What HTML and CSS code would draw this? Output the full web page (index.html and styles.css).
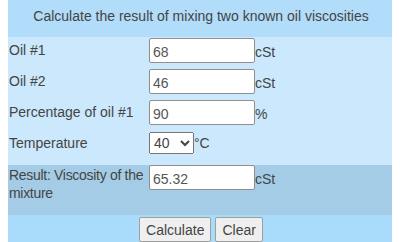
FILE: index.html
```html
<!DOCTYPE html>
<html>
<head>
    <meta name="viewport" content="width=device-width, initial-scale=1">
    <link rel="stylesheet" href="styles.css">
</head>
<body>
    <div class="calc">
        <div class="calc-title">Calculate the result of mixing two known oil viscosities</div>

        <div class="calc-row">
            <label for="oil1">Oil #1</label>
            <div class="field"><input type="text" id="oil1" value="68">cSt</div>
        </div>
        <div class="calc-row">
            <label for="oil2">Oil #2</label>
            <div class="field"><input type="text" id="oil2" value="46">cSt</div>
        </div>
        <div class="calc-row">
            <label for="pct">Percentage of oil #1</label>
            <div class="field"><input type="text" id="pct" value="90">%</div>
        </div>
        <div class="calc-row row-temp">
            <label for="temp">Temperature</label>
            <div class="field"><select id="temp">
                    <option>40</option>
                    <option>100</option>
                </select>°C</div>
        </div>

        <div class="calc-row row-result">
            <label for="result">Result: Viscosity of the mixture</label>
            <div class="field"><input type="text" id="result" value="65.32">cSt</div>
        </div>

        <div class="calc-actions">
            <button type="button">Calculate</button>
            <button type="button">Clear</button>
        </div>
    </div>
</body>
</html>
```

FILE: styles.css
```css
* {
    box-sizing: border-box;
}

body {
    margin: 0 8px;
    font-family: "Liberation Sans", Arial, sans-serif;
    font-size: 14px;
    color: #444;
    background: #fff;
}

.calc {
    width: 386px;
}

.calc-title {
    height: 37px;
    padding-top: 8px;
    text-align: center;
    background-color: #b1dcfa;
}

.calc-row {
    display: grid;
    grid-template-columns: 141px 1fr;
    align-items: start;
    height: 31px;
    padding-top: 1px;
    background-color: #cbe8fc;
}

.calc-row label {
    padding: 3px 0 0 1px;
    line-height: 19px;
}

.field {
    line-height: 19px;
}

.field input {
    width: 106px;
    height: 25px;
    margin: 0;
    padding: 2px 3px 0;
    border: 1px solid #8f8f8f;
    border-radius: 2px;
    font-family: inherit;
    font-size: 14px;
    color: #555;
    background: #fff;
}

.field select {
    width: 45px;
    height: 22px;
    margin: 1px 0 0;
    font-family: inherit;
    font-size: 14px;
    color: #444;
}

.row-temp {
    height: 35px;
}

.row-result {
    height: 50px;
    padding-top: 0;
    background-color: #a4cce6;
}

/* squeeze so "the" stays on the first line like the original */
.row-result label {
    padding-top: 1px;
    line-height: 18px;
    letter-spacing: -0.3px;
}

.calc-actions {
    display: flex;
    justify-content: center;
    gap: 4px;
    height: 29px;
    padding-top: 2px;
    background-color: #a9dbfb;
}

.calc-actions button {
    height: 25px;
    padding: 0 6px;
    font-family: inherit;
    font-size: 14px;
    color: #444;
    background-color: #efefef;
    border: 1px solid #a0a0a0;
    border-radius: 2px;
}
```
